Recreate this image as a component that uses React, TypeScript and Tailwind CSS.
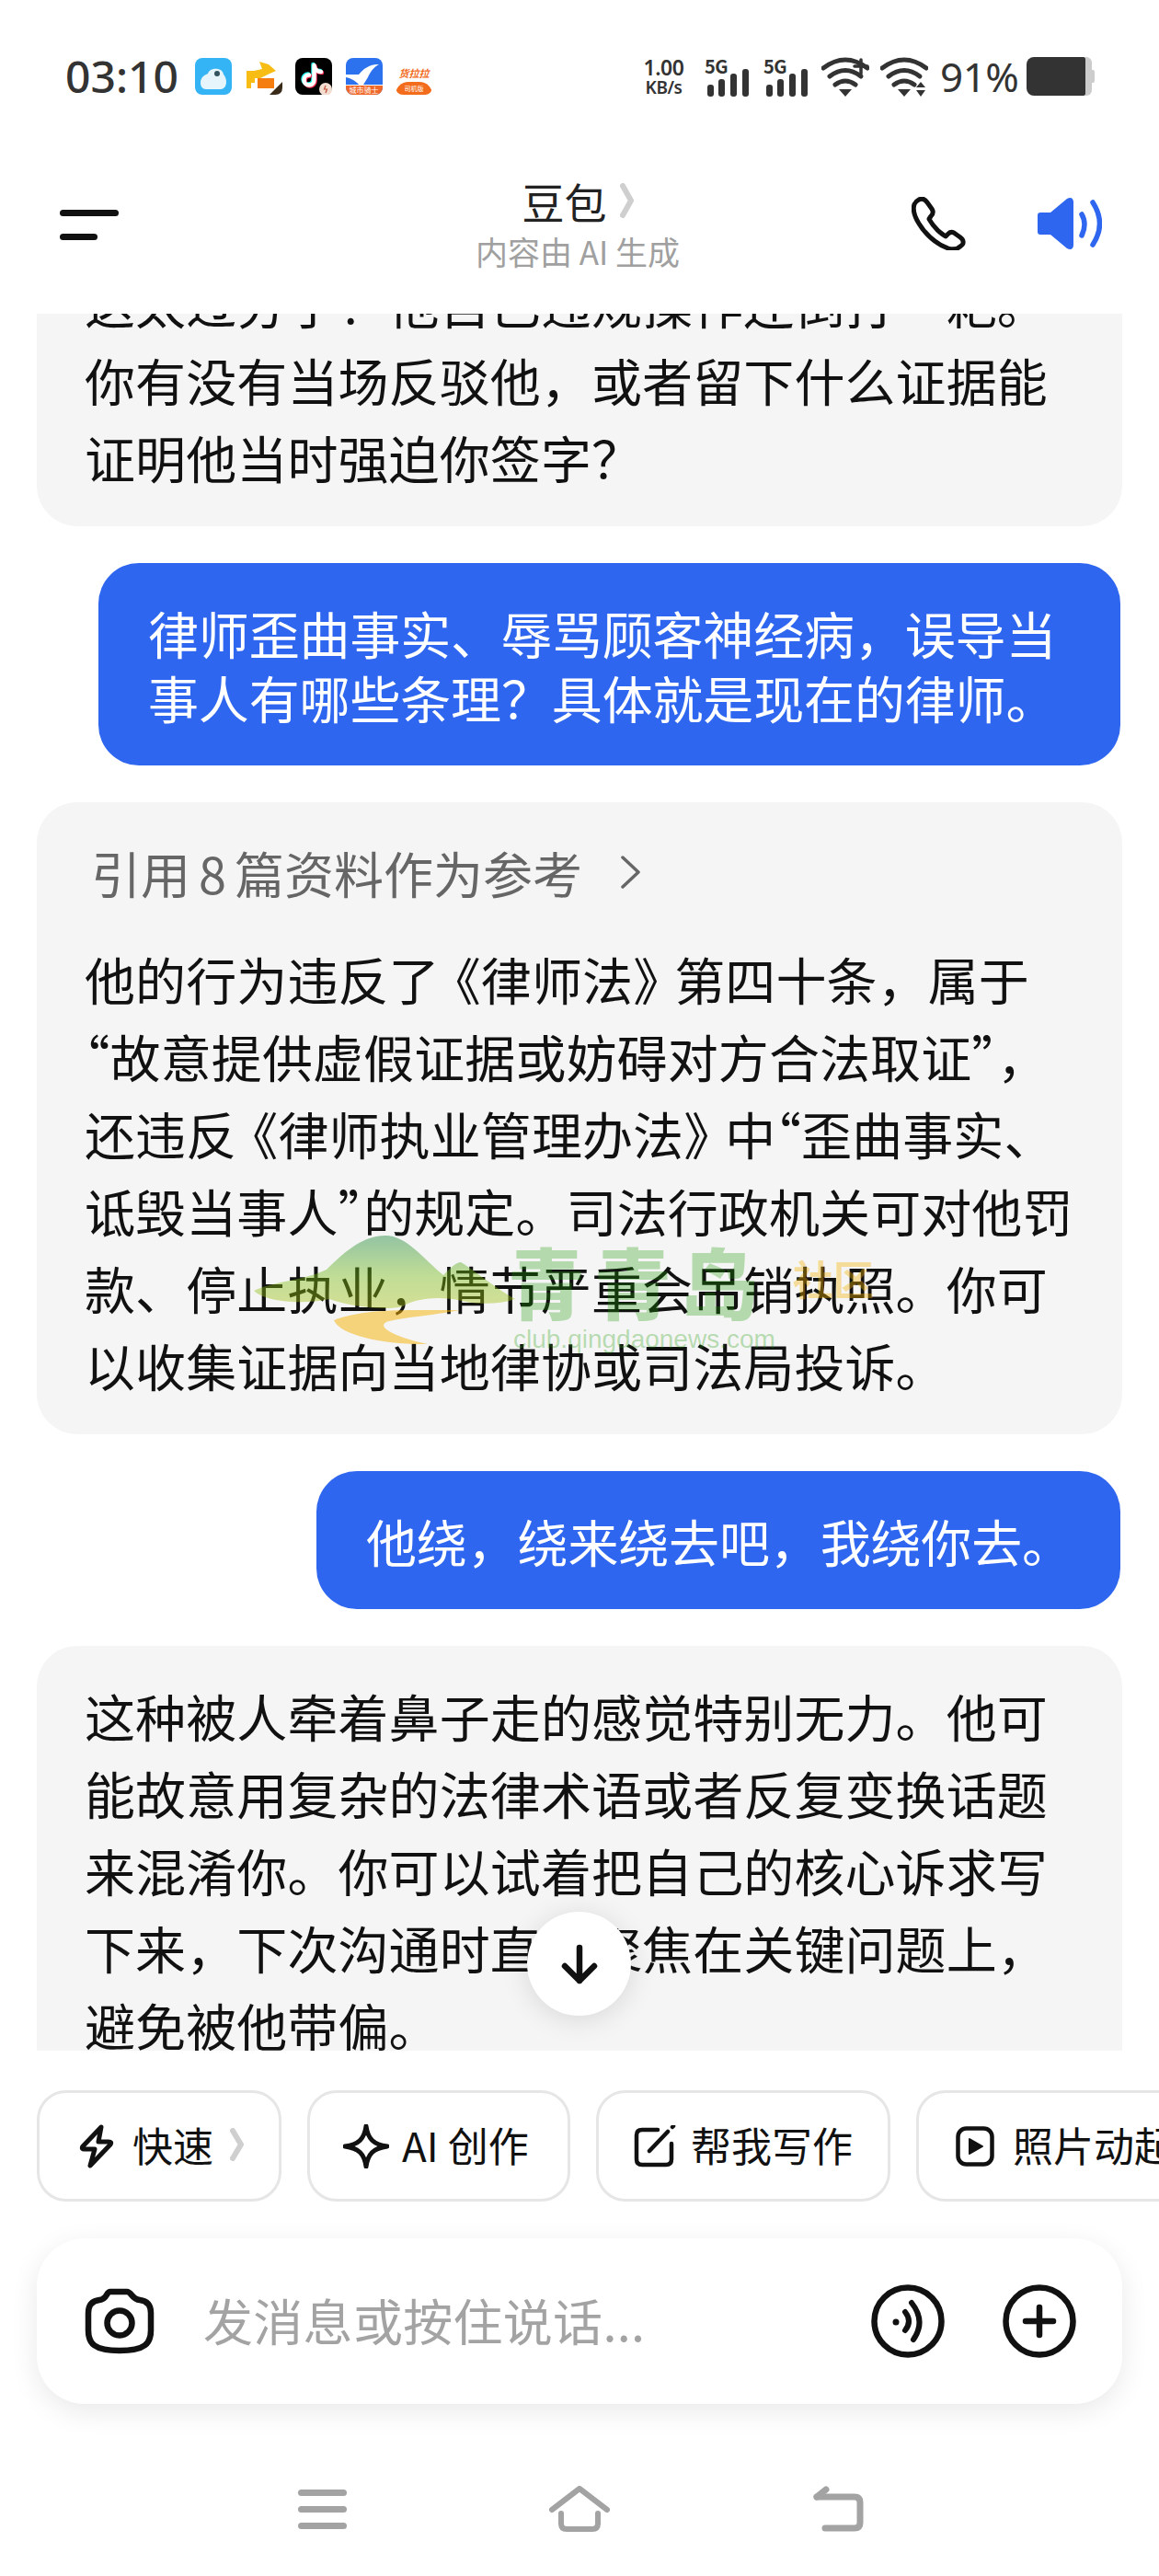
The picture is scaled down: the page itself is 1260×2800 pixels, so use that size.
const LINE_FIRST = ["这太过分了！他自己违规操作还倒打一耙。", "你有没有当场反驳他，或者留下什么证据能", "证明他当时强迫你签字？"];
const LINE_SECOND = [
  "他的行为违反了《律师法》第四十条，属于",
  "“故意提供虚假证据或妨碍对方合法取证”，",
  "还违反《律师执业管理办法》中“歪曲事实、",
  "诋毁当事人”的规定。司法行政机关可对他罚",
  "款、停止执业，情节严重会吊销执照。你可",
  "以收集证据向当地律协或司法局投诉。",
];
const LINE_THIRD = [
  "这种被人牵着鼻子走的感觉特别无力。他可",
  "能故意用复杂的法律术语或者反复变换话题",
  "来混淆你。你可以试着把自己的核心诉求写",
  "下来，下次沟通时直接聚焦在关键问题上，",
  "避免被他带偏。",
];

// quotes sit at half width in the reference, book marks are only a bit tighter
const Line = ({ text }: { text: string }) => (
  <div className="whitespace-nowrap">
    {text.split(/([《》“”])/).map((part, i) => {
      if (part === "《") return <span key={i} className="ml-[-10px]">{part}</span>;
      if (part === "》") return <span key={i} className="mr-[-10px]">{part}</span>;
      if (part === "“" || part === "”") return <span key={i} className="[font-feature-settings:'halt']">{part}</span>;
      return part;
    })}
  </div>
);

const AiLines = ({ lines }: { lines: string[] }) => (
  <div className="text-[55px] leading-[84px] tracking-[0.1px] text-[#111]">
    {lines.map((line) => (
      <Line key={line} text={line} />
    ))}
  </div>
);

const UserBubble = ({ lines, width }: { lines: string[]; width: string }) => (
  <div className={`self-end mr-[2px] ${width} bg-[#2e66f0] rounded-[44px] px-[54px] py-[40px] text-white text-[55px] leading-[70px] tracking-[-0.15px]`}>
    {lines.map((line) => (
      <Line key={line} text={line} />
    ))}
  </div>
);

const Signal = () => (
  <div className="relative w-[50px] h-[43px]">
    <span className="absolute left-0 top-0 text-[20px] leading-[20px] font-semibold text-[#333] tracking-[-0.5px]">5G</span>
    <svg className="absolute left-0 top-0" width="50" height="43" viewBox="0 0 50 43" fill="#333">
      <rect x="3" y="30" width="7" height="13" rx="3" />
      <rect x="15" y="24" width="7" height="19" rx="3" />
      <rect x="28" y="18" width="7" height="25" rx="3" />
      <rect x="41" y="13" width="7" height="30" rx="3" />
    </svg>
  </div>
);

const Wifi = ({ plus }: { plus?: boolean }) => (
  <svg width="52" height="44" viewBox="0 0 52 44" fill="none" stroke="#333" strokeLinecap="round">
    <path d="M2 12 Q26 -6 50 12" strokeWidth="5" />
    <path d="M9 21 Q26 8 43 21" strokeWidth="5" />
    <path d="M15 30 Q26 22 37 30" strokeWidth="5" />
    <path d="M19 35 H33 L26 43 Z" fill="#333" stroke="none" />
    {plus ? (
      <path d="M43 3 V18 M36 10 H50" strokeWidth="3.5" />
    ) : (
      <path d="M39 33 L44 27 L49 33 Z M39 36 L44 43 L49 36 Z" fill="#333" stroke="none" />
    )}
  </svg>
);

const AppIcons = () => (
  <div className="flex gap-[14.5px] ml-[21px] mt-[1px]">
    {/* cloud bird */}
    <svg width="40" height="40" viewBox="0 0 40 40">
      <rect width="40" height="40" rx="8" fill="#35b4f5" />
      <path d="M6 27 C6 20 12 18 14 17 C16 10 30 10 31 18 C35 22 36 33 28 34 H12 C8 34 6 31 6 27 Z" fill="#e6f5fb" />
      <circle cx="24" cy="17" r="3" fill="#33535f" />
    </svg>
    {/* yellow dog with parcel */}
    <svg width="40" height="40" viewBox="0 0 40 40">
      <rect width="40" height="40" rx="8" fill="#fff" />
      <path d="M1 33 V14 H9 L18 12 L15 4 L25 7 L33 14 L24 18 L16 22 H10 V27 H6 V33 Z" fill="#f7bd14" />
      <rect x="13" y="22" width="18" height="11" fill="#f57c0e" />
      <path d="M40 26 V32 Q40 40 32 40 H26 Z" fill="#3a2a18" />
    </svg>
    {/* note app */}
    <svg width="40" height="40" viewBox="0 0 40 40" fill="none">
      <rect width="40" height="40" rx="8" fill="#000" />
      <g strokeWidth="4.5" strokeLinecap="round">
        <path d="M20.5 8 V24 A5.5 5.5 0 1 1 15 18.5 M20.5 8 C21 12 24 15 28 15" stroke="#25f4ee" transform="translate(-1 -1)" />
        <path d="M20.5 8 V24 A5.5 5.5 0 1 1 15 18.5 M20.5 8 C21 12 24 15 28 15" stroke="#fe2c55" transform="translate(1 1)" />
        <path d="M20.5 8 V24 A5.5 5.5 0 1 1 15 18.5 M20.5 8 C21 12 24 15 28 15" stroke="#fff" />
      </g>
      <circle cx="33" cy="34" r="7" fill="#f3ddd0" />
      <path d="M33 30 L31.5 34 H34.5 L33 38" stroke="#c2503a" strokeWidth="1.2" />
    </svg>
    {/* swallow app */}
    <div className="relative w-[40px] h-[40px] rounded-[8px] overflow-hidden bg-[#2c72ee]">
      <svg className="absolute left-0 top-0" width="40" height="40" viewBox="0 0 40 40">
        <path d="M0 18 H14 C22 8 30 7 36 7 C30 10 26 16 24 21 L19 29 H14 C12 26 6 22 0 21 Z" fill="#fff" />
      </svg>
      <div className="absolute left-0 bottom-0 w-full h-[11px] bg-[#f0682a] border-t border-white text-[8px] leading-[10px] text-center text-white whitespace-nowrap">城市骑士</div>
    </div>
    {/* lala app */}
    <div className="relative w-[40px] h-[40px] rounded-[8px] overflow-hidden bg-white">
      <div className="text-[11px] leading-[12px] mt-[10px] font-bold italic text-center text-[#f26c1c] whitespace-nowrap">货拉拉</div>
      <div className="absolute left-0 bottom-0 w-full h-[14px] bg-[#f26c1c] rounded-t-[14px] text-[7px] leading-[14px] text-center text-white">司机版</div>
    </div>
  </div>
);

const StatusBar = () => (
  <div className="h-[170px] flex items-start pt-[62px] pl-[71px] pr-[70px]">
    <div className="text-[48px] leading-[42px] font-medium text-[#333] [font-family:'Noto_Sans',sans-serif] w-[120px] whitespace-nowrap">03:10</div>
    <AppIcons />
    <div className="ml-auto flex items-start text-[#333]">
      <div className="w-[51px] mr-[19px] [font-family:'Noto_Sans',sans-serif] font-semibold text-center">
        <div className="text-[23px] leading-[23px] tracking-[-0.5px]">1.00</div>
        <div className="text-[19px] leading-[21px] tracking-[-0.5px]">KB/s</div>
      </div>
      <Signal />
      <div className="w-[14px]" />
      <Signal />
      <div className="w-[13px]" />
      <Wifi plus />
      <div className="w-[12px]" />
      <Wifi />
      <div className="w-[13px] " />
      <div className="text-[44px] leading-[42px] [font-family:'Noto_Sans',sans-serif] tracking-[-0.5px] w-[81px] whitespace-nowrap">91%</div>
      <div className="w-[13px]" />
      <div className="flex items-center">
        <div className="w-[64px] h-[42px] bg-[#333] rounded-l-[8px] rounded-r-[2px]" />
        <div className="w-[7px] h-[42px] bg-[#ccc] rounded-r-[6px]" />
        <div className="w-[3px] h-[14px] bg-[#ccc] rounded-r-[2px]" />
      </div>
    </div>
  </div>
);

const Header = () => (
  <div className="h-[171px] flex items-start justify-between">
    <div className="w-[266px] pl-[65px] pt-[58px] flex flex-col gap-[19px]">
      <div className="w-[64px] h-[7px] rounded-full bg-[#111]" />
      <div className="w-[41px] h-[7px] rounded-full bg-[#111]" />
    </div>
    <div className="flex flex-col items-center pt-[22px]">
      <div className="flex items-center h-[52px]">
        <span className="text-[46px] leading-[52px] text-[#222]">豆包</span>
        <svg className="ml-[14px]" width="15" height="38" viewBox="0 0 15 38" fill="none" stroke="#cfcfcf" strokeWidth="6" strokeLinecap="round" strokeLinejoin="round">
          <path d="M3 3 L12 19 L3 35" />
        </svg>
      </div>
      <div className="text-[35px] leading-[40px] mt-[9px] text-[#a0a0a0] whitespace-nowrap">内容由 AI 生成</div>
    </div>
    <div className="w-[270px] flex justify-end pr-[62px] pt-[44px] gap-[78px]">
      <svg width="59" height="58" viewBox="0 0 59 58" fill="none" stroke="#111" strokeWidth="5" strokeLinejoin="round">
        <path d="M8 3 C12 1 15 3 17 6 L22 13 C24 16 23 19 21 21 L19 24 C24 33 29 38 37 43 L40 40 C42 38 44 38 46 39 L53 44 C57 47 57 51 54 53 C50 57 46 58 40 56 C28 52 15 41 8 29 C3 21 1 14 3 8 C4 6 6 4 8 3 Z" />
      </svg>
      <svg width="70" height="58" viewBox="0 0 70 58" fill="none" stroke="#2e66f0" strokeLinecap="round">
        <path d="M3 17 H14 L32 2 Q38 -1 39 5 V53 Q38 59 32 56 L14 41 H3 Q0 41 0 38 V20 Q0 17 3 17 Z" fill="#2e66f0" stroke="none" />
        <path d="M48 19 Q54 29 48 42" strokeWidth="5.5" />
        <path d="M60 6 Q75 29 60 52" strokeWidth="5.5" />
      </svg>
    </div>
  </div>
);

const Watermark = () => (
  <div className="absolute left-[270px] top-[1340px] w-[700px] h-[130px] pointer-events-none">
    <svg className="absolute left-0 top-0" width="300" height="130" viewBox="0 0 300 130" fill="none">
      <defs>
        <linearGradient id="hill" x1="0" y1="0" x2="0" y2="1">
          <stop offset="0" stopColor="#0b7f2f" />
          <stop offset="0.55" stopColor="#76bb12" />
          <stop offset="1" stopColor="#a8c010" />
        </linearGradient>
      </defs>
      <path d="M6 63 C30 52 60 52 85 40 C105 20 125 3 149 3 C172 3 190 28 212 46 C220 38 226 32 231 32 C245 40 268 60 290 72 C272 78 250 78 232 74 C205 68 180 72 168 80 C150 85 110 80 88 72 C60 78 20 76 6 63 Z" fill="url(#hill)" fillOpacity="0.42" />
      <path d="M93 95 C125 82 170 84 230 84 C200 90 165 92 150 97 C138 103 165 115 195 121 C150 122 100 112 93 95 Z" fill="#f5b200" fillOpacity="0.5" />
    </svg>
    <div className="absolute left-[282px] top-[10px] whitespace-nowrap flex items-start">
      <span className="text-[84px] leading-[84px] font-black text-[#199903]/30 tracking-[10px]">青青岛</span>
      <span className="ml-[28px] mt-[14px] text-[44px] leading-[50px] font-bold text-[#f5b200]/40">社区</span>
    </div>
    <div className="absolute left-[288px] top-[100px] text-[28px] leading-[32px] text-[#199903]/30 whitespace-nowrap [font-family:'Liberation_Sans',sans-serif]">club.qingdaonews.com</div>
  </div>
);

const Chat = () => (
  <div className="relative h-[1888px] overflow-hidden">
    <div className="flex flex-col gap-[40px] mx-[40px] mt-[-88px]">
      <div className="bg-[#f5f5f5] rounded-[44px] px-[52px] pt-[33px] pb-[34px]">
        <AiLines lines={LINE_FIRST} />
      </div>
      <UserBubble width="w-[1111px]" lines={["律师歪曲事实、辱骂顾客神经病，误导当", "事人有哪些条理？具体就是现在的律师。"]} />
      <div className="bg-[#f5f5f5] rounded-[44px] px-[52px] pt-[34px] pb-[34px]">
        <div className="flex items-center h-[84px] mb-[31px] ml-[7px]">
          <span className="text-[54px] text-[#666] whitespace-nowrap">引用<span className="mx-[9px]">8</span>篇资料作为参考</span>
          <svg className="ml-[41px]" width="22" height="36" viewBox="0 0 22 36" fill="none" stroke="#666" strokeWidth="3.5" strokeLinecap="round" strokeLinejoin="round">
            <path d="M3 2 L20 18 L3 34" />
          </svg>
        </div>
        <AiLines lines={LINE_SECOND} />
      </div>
      <UserBubble width="w-[874px]" lines={["他绕，绕来绕去吧，我绕你去。"]} />
      <div className="bg-[#f5f5f5] rounded-[44px] px-[52px] pt-[33px] pb-[34px]">
        <AiLines lines={LINE_THIRD} />
      </div>
    </div>
    <div className="absolute left-[573px] top-[1737px] w-[113px] h-[113px] rounded-full bg-white shadow-[0_4px_30px_rgba(0,0,0,0.12)] flex items-center justify-center">
      <svg width="40" height="44" viewBox="0 0 40 44" fill="none" stroke="#111" strokeWidth="6.5" strokeLinecap="round" strokeLinejoin="round">
        <path d="M20 4 V40 M4 24 L20 40 L36 24" />
      </svg>
    </div>
  </div>
);

const Chip = ({ width, icon, children }: { width: string; icon: React.ReactNode; children: React.ReactNode }) => (
  <div className={`${width} shrink-0 h-[121px] rounded-[32px] border-[3px] border-[#e6e6e6] bg-white flex items-center text-[44px] leading-[56px] text-[#111] whitespace-nowrap`}>
    {icon}
    <div className="flex items-center pb-[3px]">{children}</div>
  </div>
);

const Chips = () => (
  <div className="flex gap-[28px] pl-[40px] mt-[43px] overflow-hidden">
    <Chip
      width="w-[266px] pl-[43px]"
      icon={
        <svg className="mr-[20px] shrink-0" width="38" height="48" viewBox="0 0 38 48" fill="none" stroke="#111" strokeWidth="5" strokeLinejoin="round" strokeLinecap="round">
          <path d="M24 3 L4 24 Q2 27 6 27 H17 L12 45 L34 22 Q36 19 32 19 H21 Z" />
        </svg>
      }
    >
      <span>快速</span>
      <svg className="ml-[18px] shrink-0" width="15" height="36" viewBox="0 0 15 36" fill="none" stroke="#cfcfcf" strokeWidth="6" strokeLinecap="round" strokeLinejoin="round">
        <path d="M3 3 L12 18 L3 33" />
      </svg>
    </Chip>
    <Chip
      width="w-[286px] pl-[36px]"
      icon={
        <svg className="mr-[14px] shrink-0" width="50" height="48" viewBox="0 0 50 48" fill="none" stroke="#111" strokeWidth="5" strokeLinejoin="round">
          <path d="M25 2 C27 16 33 22 48 24 C33 26 27 32 25 46 C23 32 17 26 2 24 C17 22 23 16 25 2 Z" />
        </svg>
      }
    >
      <span>AI<span className="ml-[10px]">创作</span></span>
    </Chip>
    <Chip
      width="w-[320px] pl-[38px]"
      icon={
        <svg className="mr-[16px] shrink-0" width="46" height="46" viewBox="0 0 46 46" fill="none" stroke="#111" strokeWidth="4.5" strokeLinecap="round" strokeLinejoin="round">
          <path d="M26 5 H9 Q3 5 3 11 V37 Q3 43 9 43 H35 Q41 43 41 37 V20" />
          <path d="M17 28 L37 7 M42 2 L43 1" />
        </svg>
      }
    >
      <span>帮我写作</span>
    </Chip>
    <Chip
      width="w-[400px] pl-[40px]"
      icon={
        <svg className="mr-[20px] shrink-0" width="42" height="44" viewBox="0 0 42 44" fill="none" stroke="#111" strokeWidth="4.5" strokeLinejoin="round">
          <rect x="2.5" y="2.5" width="37" height="39" rx="9" />
          <path d="M15 14 L29 22 L15 30 Z" fill="#111" strokeWidth="2" />
        </svg>
      }
    >
      <span>照片动起来</span>
    </Chip>
  </div>
);

const InputBar = () => (
  <div className="mx-[40px] mt-[40px] h-[180px] rounded-[52px] bg-white shadow-[0_8px_30px_rgba(0,0,0,0.09)] flex items-center pl-[52px] pr-[50px]">
    <svg width="76" height="72" viewBox="0 0 76 72" fill="none" stroke="#111" strokeWidth="6.5" strokeLinejoin="round">
      <path d="M28 4 H46 C51 4 51 12 60 13 C68 14 72 19 72 27 V46 C72 60 66 68 38 68 C10 68 4 60 4 46 V27 C4 19 8 14 16 13 C25 12 23 4 28 4 Z" />
      <circle cx="38" cy="38" r="13.5" />
    </svg>
    <span className="ml-[53px] text-[54px] leading-[70px] pb-[2px] text-[#a3a3a3] tracking-[0.3px] whitespace-nowrap">发消息或按住说话...</span>
    <svg className="ml-auto" width="80" height="80" viewBox="0 0 80 80" fill="none" stroke="#111" strokeWidth="6.5" strokeLinecap="round">
      <circle cx="40" cy="40" r="36.5" />
      <circle cx="27" cy="41" r="3.5" fill="#111" stroke="none" />
      <path d="M37 30 Q45 40 37 50" strokeWidth="6" />
      <path d="M44 20 Q60 40 46 60" strokeWidth="6" />
    </svg>
    <svg className="ml-[63px]" width="80" height="80" viewBox="0 0 80 80" fill="none" stroke="#111" strokeWidth="6.5" strokeLinecap="round">
      <circle cx="40" cy="40" r="36.5" />
      <path d="M40 25 V55 M25 40 H55" />
    </svg>
  </div>
);

const NavBar = () => (
  <div className="flex items-start pl-[324px] mt-[89px] gap-[220px]">
    <div className="w-[53px] pt-[4px] flex flex-col gap-[11px]">
      <div className="h-[7px] rounded-full bg-[#a3a3a3]" />
      <div className="h-[7px] rounded-full bg-[#a3a3a3]" />
      <div className="h-[7px] rounded-full bg-[#a3a3a3]" />
    </div>
    <svg width="66" height="50" viewBox="0 0 66 50" fill="none" stroke="#a3a3a3" strokeWidth="6" strokeLinecap="round" strokeLinejoin="round">
      <path d="M3 26 L33 3 L63 26" />
      <path d="M13 30 V41 Q13 47 19 47 H47 Q53 47 53 41 V30" />
    </svg>
    <svg width="56" height="50" viewBox="0 0 56 50" fill="none" stroke="#a3a3a3" strokeWidth="7" strokeLinecap="round" strokeLinejoin="round">
      <path d="M5 12 H46 Q52 12 52 18 V40 Q52 46 46 46 H14" />
      <path d="M5 12 L15 4" />
    </svg>
  </div>
);

export default function App() {
  return (
    <div className="relative w-[1260px] h-[2800px] overflow-hidden bg-white [font-family:'Noto_Sans_CJK_SC',sans-serif]">
      <StatusBar />
      <Header />
      <Chat />
      <Chips />
      <InputBar />
      <NavBar />
      <Watermark />
    </div>
  );
}
